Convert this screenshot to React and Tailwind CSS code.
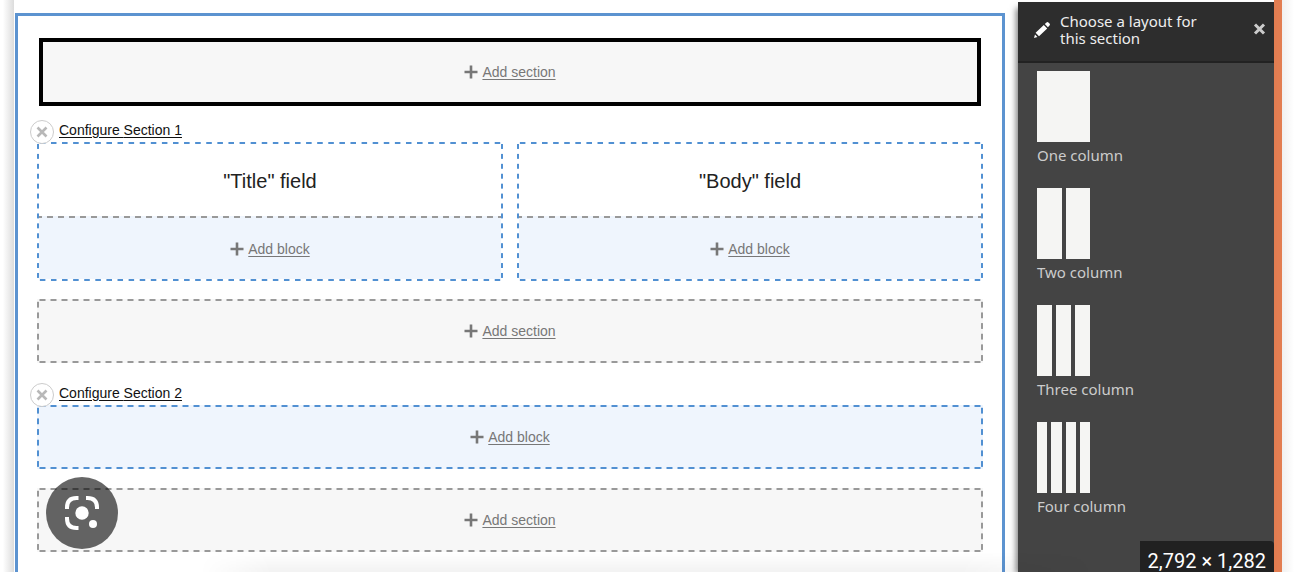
import React from "react";

const grayDashes =
  "bg-[linear-gradient(90deg,#999_25%,transparent_25%_75%,#999_75%),linear-gradient(90deg,#999_25%,transparent_25%_75%,#999_75%),linear-gradient(#999_25%,transparent_25%_75%,#999_75%),linear-gradient(#999_25%,transparent_25%_75%,#999_75%)]";
const blueDashes =
  "bg-[linear-gradient(90deg,#5190d2_25%,transparent_25%_75%,#5190d2_75%),linear-gradient(90deg,#5190d2_25%,transparent_25%_75%,#5190d2_75%),linear-gradient(#5190d2_25%,transparent_25%_75%,#5190d2_75%),linear-gradient(#5190d2_25%,transparent_25%_75%,#5190d2_75%)]";
const dashLayout =
  "[background-position:top,bottom,left,right] [background-repeat:round_no-repeat,round_no-repeat,no-repeat_round,no-repeat_round] [background-size:11px_2px,11px_2px,2px_10px,2px_10px]";

function PlusIcon() {
  return (
    <svg width="14" height="14" viewBox="0 0 14 14" aria-hidden="true">
      <path d="M7 0.500v13M0.500 7h13" stroke="#777" strokeWidth="2.6" />
    </svg>
  );
}

function AddLink({ label }) {
  return (
    <a href="#add" className="flex items-center gap-1 text-[14px] leading-4 text-[#777]">
      <PlusIcon />
      <span className="underline underline-offset-2">{label}</span>
    </a>
  );
}

function AddSection({ active }) {
  return (
    <div
      className={
        active
          ? "mx-0.5 flex h-[68px] items-center justify-center border-4 border-black bg-[#f7f7f7]"
          : "flex h-16 items-center justify-center bg-[#f7f7f7] " + grayDashes + " " + dashLayout
      }
    >
      <AddLink label="Add section" />
    </div>
  );
}

function SectionHeader({ label }) {
  return (
    <div className="relative flex h-[18px] items-start pl-[22px]">
      <button
        type="button"
        aria-label={"Remove " + label}
        className="absolute -left-[7px] -top-1 z-10 flex size-6 items-center justify-center rounded-full border border-[#ccc] bg-white"
      >
        <svg width="12" height="12" viewBox="0 0 12 12" aria-hidden="true">
          <path d="M1.5 1.5l9 9M10.5 1.5l-9 9" stroke="#b8b8b8" strokeWidth="2.6" />
        </svg>
      </button>
      <a href="#configure" className="text-[14px] leading-3 text-[#111] underline underline-offset-2">
        Configure {label}
      </a>
    </div>
  );
}

function FieldRegion({ field }) {
  return (
    <div className={"flex-1 p-0.5 " + blueDashes + " " + dashLayout}>
      <div className="flex h-[72px] items-center justify-center pt-0.5 text-[20px] text-[#222]">{field}</div>
      <div className="h-0.5 bg-[#eff5fd] bg-[linear-gradient(90deg,#999_25%,transparent_25%_75%,#999_75%)] [background-repeat:round_no-repeat] [background-size:11px_2px]" />
      <div className="flex h-[61px] items-center justify-center bg-[#eff5fd]">
        <AddLink label="Add block" />
      </div>
    </div>
  );
}

const layouts = [
  { name: "One column", columns: [1] },
  { name: "Two column", columns: [1, 2] },
  { name: "Three column", columns: [1, 2, 3] },
  { name: "Four column", columns: [1, 2, 3, 4] },
];

function LayoutOption({ name, columns }) {
  return (
    <a href="#layout" className="flex h-[117px] flex-col items-start">
      <span className="flex h-[71px] w-[53px] gap-1">
        {columns.map((c) => (
          <span key={c} className="flex-1 bg-[#f5f5f3]" />
        ))}
      </span>
      <span className="mt-[3px] text-[15px] leading-5">{name}</span>
    </a>
  );
}

function Sidebar() {
  return (
    <aside className="relative mt-0.5 w-64 shrink-0 bg-[#444] font-['Noto_Sans',sans-serif] text-[#ccc] shadow-[-4px_4px_6px_-2px_rgba(0,0,0,0.5)]">
      <header className="flex h-[61px] items-start border-b-2 border-[#222] bg-[#2d2d2d] pl-4 pr-2 pt-[11px] text-[#eee]">
        <svg className="mt-[9px] shrink-0" width="16" height="16" viewBox="0 0 16 16" aria-hidden="true">
          <path d="M0 16l1-3.400 2.400 2.400zM1.600 10.800L9.800 3l3.400 3.400L5 14.200zM10.800 2.100l1.700-1.600q1-.9 1.900 0l1.100 1.100q.9.900 0 1.900L13.900 5.200z" fill="#fff" />
        </svg>
        <h2 className="ml-[10px] w-[150px] text-[15px] font-normal leading-[17px]">Choose a layout for this section</h2>
        <button type="button" aria-label="Close" className="ml-auto mt-[10px]">
          <svg width="13" height="12" viewBox="0 0 13 12">
            <path d="M2 1.500l9 9M11 1.500l-9 9" stroke="#ccc" strokeWidth="3" />
          </svg>
        </button>
      </header>
      <nav className="pl-[19px] pt-2">
        {layouts.map((l) => (
          <LayoutOption key={l.name} {...l} />
        ))}
      </nav>
      <div className="absolute bottom-0 right-0 flex h-[31px] items-center rounded-tr bg-[#212121] px-2 pt-2 font-[Roboto,sans-serif] text-[20px] text-white">
        2,792 × 1,282
      </div>
    </aside>
  );
}

export default function App() {
  return (
    <div className="relative flex h-screen overflow-hidden bg-white font-['Liberation_Sans',sans-serif]">
      <div className="w-[14px] shrink-0 bg-linear-to-r from-white from-20% to-[#dcdcdc]" />
      <main className="ml-px mr-[13px] mt-[13px] min-w-0 flex-1 border-x-3 border-t-3 border-[#5c93d0] px-[19px] pt-[22px]">
        <AddSection active />
        <section className="mt-[18px]">
          <SectionHeader label="Section 1" />
          <div className="flex gap-[14px]">
            <FieldRegion field={'"Title" field'} />
            <FieldRegion field={'"Body" field'} />
          </div>
        </section>
        <div className="mt-[18px]">
          <AddSection />
        </div>
        <section className="mt-6">
          <SectionHeader label="Section 2" />
          <div className={"flex h-16 items-center justify-center bg-[#eff5fd] " + blueDashes + " " + dashLayout}>
            <AddLink label="Add block" />
          </div>
        </section>
        <div className="mt-[19px]">
          <AddSection />
        </div>
      </main>
      <Sidebar />
      <div className="w-2 shrink-0 bg-[#e37e52]" />
      <div className="w-3 shrink-0 bg-linear-to-r from-[#f1f1f1] to-white" />
      <div className="pointer-events-none absolute bottom-0 left-[200px] right-[200px] h-5 bg-linear-to-b from-transparent to-black/5 [mask-image:linear-gradient(90deg,transparent,#000_8%,#000_85%,transparent)]" />
      <button
        type="button"
        aria-label="Search inside image"
        className="absolute bottom-[23px] left-[46px] z-20 flex size-[72px] items-center justify-center rounded-full bg-black/60"
      >
        <svg width="36" height="36" viewBox="0 0 36 36" aria-hidden="true">
          <g fill="none" stroke="#fff" strokeWidth="4">
            <path d="M3 14v-1.500Q3 3 12.500 3h2M22 3h1.500Q33 3 33 12.500v1.500M3 22v1.500Q3 33 12.500 33h2" />
          </g>
          <circle cx="18" cy="18" r="6.700" fill="#fff" />
          <circle cx="29" cy="29" r="4" fill="#fff" />
        </svg>
      </button>
    </div>
  );
}
